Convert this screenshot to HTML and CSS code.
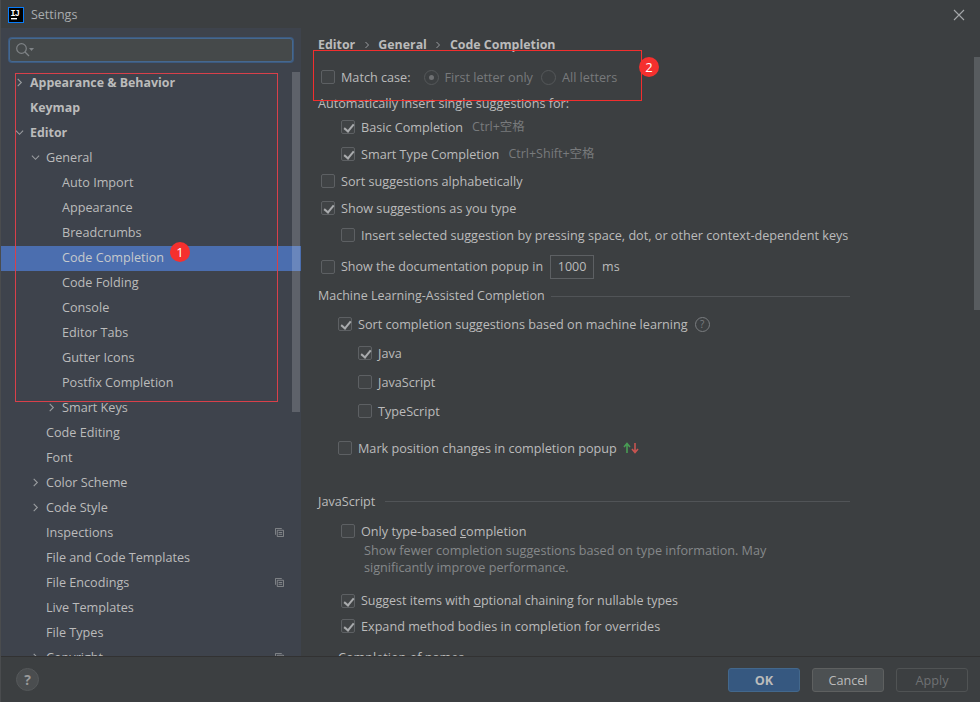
FILE: index.html
```html
<!DOCTYPE html>
<html lang="en">
<head>
<meta charset="utf-8">
<title>Settings</title>
<link rel="stylesheet" href="styles.css">
</head>
<body>
<div class="window">
  <header class="titlebar">
    <svg class="logo" width="16" height="16" viewBox="0 0 16 16"><rect x="0.5" y="0.5" width="15" height="15" fill="#000" stroke="#087cfa"/><rect x="3" y="11" width="6" height="1.4" fill="#fff"/><text x="2.5" y="8.5" class="logo-text">IJ</text></svg>
    <span class="title">Settings</span>
    <svg class="close" width="12" height="12" viewBox="0 0 12 12"><path d="M1 1 L11 11 M11 1 L1 11" stroke="#a5a8aa" stroke-width="1.1"/></svg>
  </header>
  <div class="main">
    <aside class="sidebar">
      <div class="search-wrap">
        <div class="search">
          <svg width="20" height="16" viewBox="0 0 20 16"><circle cx="6.5" cy="6.5" r="4.8" fill="none" stroke="#7f8386" stroke-width="1.2"/><path d="M10 10 L14 14" stroke="#7f8386" stroke-width="1.3"/><path d="M14 6 L19 6 L16.5 9 Z" fill="#7f8386"/></svg>
        </div>
      </div>
      <div class="tree-wrap">
        <ul class="tree">
          <li class="node bold l0"><svg class="arrow" viewBox="0 0 10 10"><path d="M3 1 L7 5 L3 9"/></svg>Appearance &amp; Behavior</li>
          <li class="node bold l0">Keymap</li>
          <li class="node bold l0"><svg class="arrow" viewBox="0 0 10 10"><path d="M1 3 L5 7 L9 3"/></svg>Editor</li>
          <li class="node l1"><svg class="arrow" viewBox="0 0 10 10"><path d="M1 3 L5 7 L9 3"/></svg>General</li>
          <li class="node l2">Auto Import</li>
          <li class="node l2">Appearance</li>
          <li class="node l2">Breadcrumbs</li>
          <li class="node l2 selected">Code Completion</li>
          <li class="node l2">Code Folding</li>
          <li class="node l2">Console</li>
          <li class="node l2">Editor Tabs</li>
          <li class="node l2">Gutter Icons</li>
          <li class="node l2">Postfix Completion</li>
          <li class="node l2"><svg class="arrow" viewBox="0 0 10 10"><path d="M3 1 L7 5 L3 9"/></svg>Smart Keys</li>
          <li class="node l1">Code Editing</li>
          <li class="node l1">Font</li>
          <li class="node l1"><svg class="arrow" viewBox="0 0 10 10"><path d="M3 1 L7 5 L3 9"/></svg>Color Scheme</li>
          <li class="node l1"><svg class="arrow" viewBox="0 0 10 10"><path d="M3 1 L7 5 L3 9"/></svg>Code Style</li>
          <li class="node l1">Inspections<svg class="copy" viewBox="0 0 10 10"><path d="M0.5 7.5 V0.5 H7.5 M2.5 2.5 H9.5 V9.5 H2.5 Z M4 5 H8 M4 7 H8"/></svg></li>
          <li class="node l1">File and Code Templates</li>
          <li class="node l1">File Encodings<svg class="copy" viewBox="0 0 10 10"><path d="M0.5 7.5 V0.5 H7.5 M2.5 2.5 H9.5 V9.5 H2.5 Z M4 5 H8 M4 7 H8"/></svg></li>
          <li class="node l1">Live Templates</li>
          <li class="node l1">File Types</li>
          <li class="node l1"><svg class="arrow" viewBox="0 0 10 10"><path d="M3 1 L7 5 L3 9"/></svg>Copyright<svg class="copy" viewBox="0 0 10 10"><path d="M0.5 7.5 V0.5 H7.5 M2.5 2.5 H9.5 V9.5 H2.5 Z M4 5 H8 M4 7 H8"/></svg></li>
        </ul>
        <div class="tree-scroll"></div>
      </div>
    </aside>
    <section class="content">
      <nav class="crumbs"><b>Editor</b><svg class="sep" viewBox="0 0 6 8"><path d="M1.5 1 L4.5 4 L1.5 7"/></svg><b>General</b><svg class="sep" viewBox="0 0 6 8"><path d="M1.5 1 L4.5 4 L1.5 7"/></svg><b>Code Completion</b></nav>

      <div class="row h-match">
        <span class="cb"></span><span class="lbl">Match case:</span>
        <span class="radio on"></span><span class="muted r1">First letter only</span>
        <span class="radio"></span><span class="muted">All letters</span>
      </div>
      <div class="row h-auto"><span class="lbl">Automatically insert single suggestions for:</span></div>
      <div class="row ind1 h-basic"><span class="cb checked"></span><span class="lbl">Basic Completion</span><span class="key">Ctrl+空格</span></div>
      <div class="row ind1 h27"><span class="cb checked"></span><span class="lbl">Smart Type Completion</span><span class="key">Ctrl+Shift+空格</span></div>
      <div class="row ind0 h27"><span class="cb"></span><span class="lbl">Sort suggestions alphabetically</span></div>
      <div class="row ind0 h27"><span class="cb checked"></span><span class="lbl">Show suggestions as you type</span></div>
      <div class="row ind1 h27"><span class="cb"></span><span class="lbl">Insert selected suggestion by pressing space, dot, or other context-dependent keys</span></div>
      <div class="row h-doc tight"><span class="cb"></span><span class="lbl">Show the documentation popup in</span><span class="num">1000</span><span class="lbl">ms</span></div>

      <div class="group h-ml tight"><span>Machine Learning-Assisted Completion</span><i></i></div>
      <div class="row ind1b h-sort"><span class="cb checked"></span><span class="lbl">Sort completion suggestions based on machine learning</span><span class="help">?</span></div>
      <div class="row ind2 h29"><span class="cb checked"></span><span class="lbl">Java</span></div>
      <div class="row ind2 h29"><span class="cb"></span><span class="lbl">JavaScript</span></div>
      <div class="row ind2 h29"><span class="cb"></span><span class="lbl">TypeScript</span></div>
      <div class="row ind1b h-mark"><span class="cb"></span><span class="lbl">Mark position changes in completion popup</span>
        <svg class="updown" width="16" height="12" viewBox="0 0 16 12"><path d="M4 11 V2 M1 5 L4 1.5 L7 5" fill="none" stroke="#499c54" stroke-width="1.6"/><path d="M12 1 V10 M9 7 L12 10.5 L15 7" fill="none" stroke="#c75450" stroke-width="1.6"/></svg>
      </div>

      <div class="group h-js"><span>JavaScript</span><i></i></div>
      <div class="row ind1 h-only"><span class="cb"></span><span class="lbl">Only type-based <u>c</u>ompletion</span></div>
      <p class="desc">Show fewer completion suggestions based on type information. May<br>significantly improve performance.</p>
      <div class="row ind1 h-sug tight"><span class="cb checked"></span><span class="lbl">Suggest items with <u>o</u>ptional chaining for nullable types</span></div>
      <div class="row ind1 h26"><span class="cb checked"></span><span class="lbl">Expand method bodies in completion for overrides</span></div>
      <div class="group2">Completion of names</div>
      <div class="content-scroll"></div>
    </section>
  </div>
  <footer class="footer">
    <span class="help-btn">?</span>
    <div class="buttons">
      <span class="btn ok">OK</span>
      <span class="btn">Cancel</span>
      <span class="btn off">Apply</span>
    </div>
  </footer>
  <div class="mark tree-mark"></div>
  <div class="mark opt-mark"></div>
  <span class="badge b1">1</span>
  <span class="badge b2">2</span>
</div>
</body>
</html>
```
FILE: styles.css
```css
* { box-sizing: border-box; }
html, body { margin: 0; padding: 0; height: 100%; background: #3c3f41; }
.window { position: relative; width: 980px; height: 702px; display: flex; flex-direction: column; overflow: hidden; background: #3c3f41; color: #bbbbbb; font: 12.65px/18px "Open Sans", "Noto Sans CJK SC", sans-serif; border-left: 1px solid #4a4c4e; }
.titlebar { height: 28px; flex: none; display: flex; align-items: center; padding: 2px 15px 0 7px; }
.logo { flex: none; }
.logo-text { font: bold 8.5px "Liberation Mono", monospace; letter-spacing: -0.8px; fill: #fff; }
.title { margin-left: 7px; color: #a9acae; font-size: 12.5px; }
.close { margin-left: auto; }
.main { flex: 1; display: flex; min-height: 0; }
.sidebar { width: 300px; flex: none; background: #3e434c; display: flex; flex-direction: column; }
.search-wrap { padding: 10px 8px 0 8px; }
.search { height: 24px; background: #45494a; border: 1px solid #46688f; border-radius: 3px; box-shadow: 0 0 0 1px #3c5a80; display: flex; align-items: center; padding-left: 5px; }
.tree-wrap { position: relative; flex: 1; min-height: 0; overflow: hidden; margin-top: 9px; }
.tree { list-style: none; margin: 0; padding: 0; }
.node { position: relative; height: 25px; line-height: 23px; white-space: nowrap; }
.l0 { padding-left: 29px; }
.l1 { padding-left: 45px; }
.l2 { padding-left: 61px; }
.bold { font-weight: 700; font-size: 12.4px; color: #bbbbbb; }
.selected { background: #4b6eaf; color: #c5c9cc; }
.arrow { position: absolute; top: 7px; width: 9px; height: 9px; fill: none; stroke: #9a9da0; stroke-width: 1.2; }
.l0 .arrow { left: 14px; }
.l1 .arrow { left: 30px; }
.l2 .arrow { left: 46px; }
.copy { position: absolute; left: 274px; top: 7px; width: 9px; height: 9px; fill: none; stroke: #8a8d90; stroke-width: 1; }
.tree-scroll { position: absolute; left: 291px; top: 1px; width: 8px; height: 340px; background: rgba(255, 255, 255, 0.17); }
.content { position: relative; flex: 1; min-width: 0; padding: 7px 0 0 17px; overflow: hidden; }
.crumbs { display: flex; align-items: center; height: 20px; color: #bbbbbb; }
.crumbs b { font-weight: 700; font-size: 12.4px; }
.sep { width: 6px; height: 8px; margin: 0 8.5px; fill: none; stroke: #9a9da0; stroke-width: 1; }
.row { display: flex; align-items: center; white-space: nowrap; }
.tight { font-size: 12.5px; }
.ind0 { padding-left: 3px; }
.ind1 { padding-left: 23px; }
.ind1b { padding-left: 20px; }
.ind2 { padding-left: 40px; }
.h-match { height: 28px; margin-top: 8px; padding-left: 3px; }
.h-auto { height: 24px; }
.h-basic { height: 27px; margin-top: -2px; }
.h27 { height: 27px; }
.h-doc { height: 34px; margin-top: 2px; padding-left: 3px; }
.h29 { height: 29px; }
.h-ml { height: 24px; }
.h-sort { height: 34px; margin-top: -1px; margin-bottom: -3px; }
.h-mark { height: 29px; margin-top: 8px; }
.h-js { height: 24px; margin-top: 27px; }
.h-only { height: 32px; margin-top: 2px; margin-bottom: -5px; }
.h-sug { height: 26px; margin-top: 12px; margin-bottom: -1px; }
.h26 { height: 26px; }
.cb { flex: none; width: 14px; height: 14px; margin-right: 6px; border: 1px solid #5d6063; border-radius: 2px; background: #404345; position: relative; }
.cb.checked::after { content: ""; position: absolute; left: 4px; top: 1px; width: 4px; height: 8px; border: solid #a9abad; border-width: 0 2px 2px 0; transform: rotate(40deg); }
.lbl { color: #bbbbbb; }
.muted { color: #787a7c; }
.r1 { margin-right: 8px; }
.radio { flex: none; width: 15px; height: 15px; margin: 0 6px 0 13px; border: 1px solid #55585a; border-radius: 50%; position: relative; }
.radio + .muted + .radio { margin-left: 0; }
.radio.on::after { content: ""; position: absolute; left: 4px; top: 4px; width: 5px; height: 5px; border-radius: 50%; background: #6e7072; }
.key { margin-left: 9px; color: #787a7c; font-size: 12.5px; }
.num { width: 44px; height: 24px; margin: 0 8px 0 7px; border: 1px solid #5d6063; text-align: center; line-height: 22px; color: #bbbbbb; }
.group { display: flex; align-items: center; width: 532px; }
.group i { flex: 1; height: 1px; background: #515457; margin-left: 6px; }
.h-js i { margin-left: 10px; }
.help { width: 15px; height: 15px; margin-left: 7px; border: 1px solid #7a7d80; border-radius: 50%; font-size: 10px; line-height: 13px; text-align: center; color: #7a7d80; }
.updown { margin-left: 6px; }
.desc { margin: 0; padding-left: 46px; line-height: 17px; color: #85888a; }
.group2 { margin-top: 9px; padding-left: 20px; }
.content-scroll { position: absolute; right: 0; top: 29px; width: 6px; height: 253px; background: #585c5f; }
.footer { position: relative; height: 46px; flex: none; display: flex; align-items: center; justify-content: space-between; padding: 0 12px 0 15px; border-top: 1px solid #323232; background: #3c3f41; }
.help-btn { width: 23px; height: 23px; border-radius: 50%; background: #4a4d4f; border: 1px solid #55585a; text-align: center; line-height: 21px; font-weight: 700; color: #999; font-size: 14px; }
.buttons { display: flex; gap: 12px; }
.btn { width: 72px; height: 24px; border: 1px solid #5e6060; border-radius: 3px; background: #4c5052; text-align: center; line-height: 22px; color: #bbbbbb; }
.btn.ok { background: #365880; border-color: #43688c; font-weight: 700; }
.btn.off { background: transparent; border-color: #505354; color: #6f7173; }
.mark { position: absolute; border: 1px solid #e8323c; }
.tree-mark { left: 14px; top: 73px; width: 263px; height: 329px; border-color: #d8404a; }
.opt-mark { left: 312px; top: 50px; width: 329px; height: 51px; border-color: #f22e2e; }
.badge { position: absolute; width: 20px; height: 20px; border-radius: 50%; background: #f5302e; color: #fff; text-align: center; line-height: 20px; font-size: 13px; }
.b1 { left: 169px; top: 242px; }
.b2 { left: 638px; top: 57px; }
```
